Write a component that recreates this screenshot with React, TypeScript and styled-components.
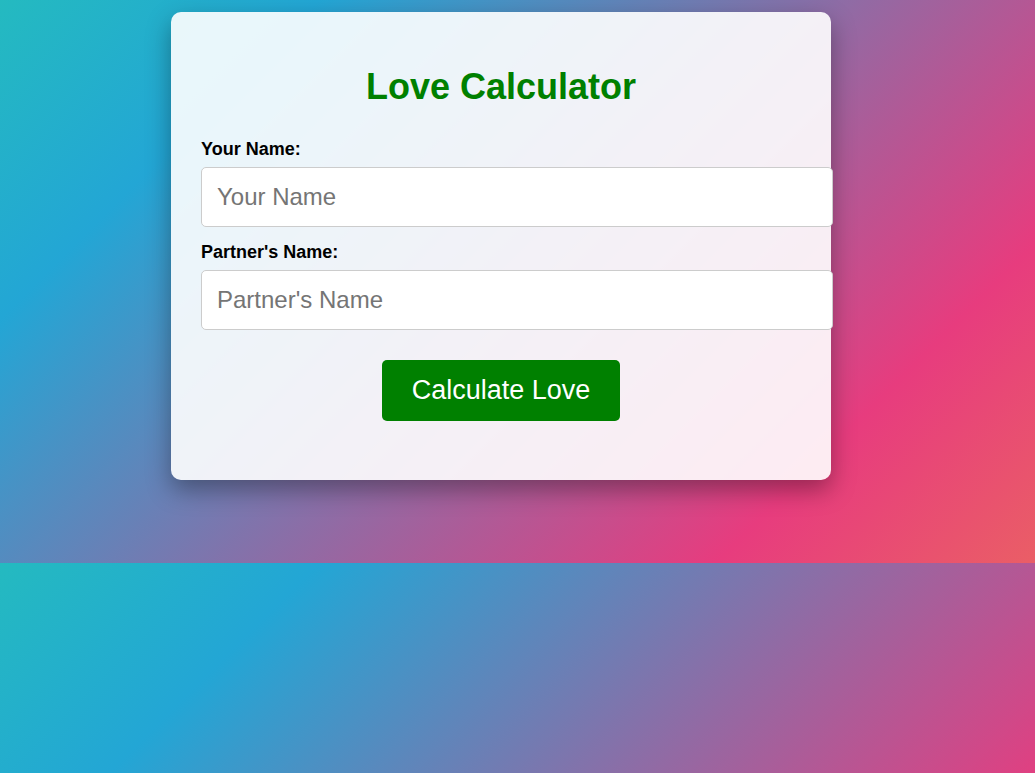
import styled, { createGlobalStyle } from 'styled-components';

const GlobalStyle = createGlobalStyle`
  html,
  body {
    margin: 0;
    padding: 0;
  }
  body {
    font-family: 'Liberation Sans', Arial, sans-serif;
    background: linear-gradient(
      135deg,
      #24bac0 0%,
      #23a6d5 20%,
      #e73c7e 80%,
      #ea5e66 100%
    );
    background-size: 100% 563px;
  }
`;

const Page = styled.div`
  padding: 12px 0 83px 171px;
`;

const Card = styled.div`
  width: 600px;
  padding: 30px;
  border-radius: 10px;
  background-color: rgba(255, 255, 255, 0.9);
  box-shadow: 0 10px 25px rgba(0, 0, 0, 0.35);
`;

const Title = styled.h1`
  margin: 24px 0 31px;
  font-size: 36px;
  font-weight: bold;
  color: #008000;
  text-align: center;
`;

const Label = styled.label`
  display: block;
  margin-bottom: 7px;
  font-size: 18px;
  font-weight: bold;
  color: #000;
`;

const Input = styled.input`
  display: block;
  width: 100%;
  margin: 0 0 15px;
  padding: 15px;
  border: 1px solid #ccc;
  border-radius: 5px;
  background: #fff;
  font-family: 'Liberation Sans', Arial, sans-serif;
  font-size: 24px;
  color: #000;

  &::placeholder {
    color: #757575;
  }
`;

const Actions = styled.div`
  margin-top: 30px;
  text-align: center;
`;

const Button = styled.button`
  padding: 15px 30px;
  border: none;
  border-radius: 5px;
  background-color: #008000;
  color: #fff;
  font-family: 'Liberation Sans', Arial, sans-serif;
  font-size: 27px;
  cursor: pointer;
`;

const Result = styled.div`
  min-height: 29px;
`;

const App = () => {
  return (
    <>
      <GlobalStyle />
      <Page>
        <Card>
          <Title>Love Calculator</Title>
          <Label htmlFor="name1">Your Name:</Label>
          <Input id="name1" type="text" placeholder="Your Name" />
          <Label htmlFor="name2">Partner's Name:</Label>
          <Input id="name2" type="text" placeholder="Partner's Name" />
          <Actions>
            <Button>Calculate Love</Button>
          </Actions>
          <Result />
        </Card>
      </Page>
    </>
  );
};

export default App;
